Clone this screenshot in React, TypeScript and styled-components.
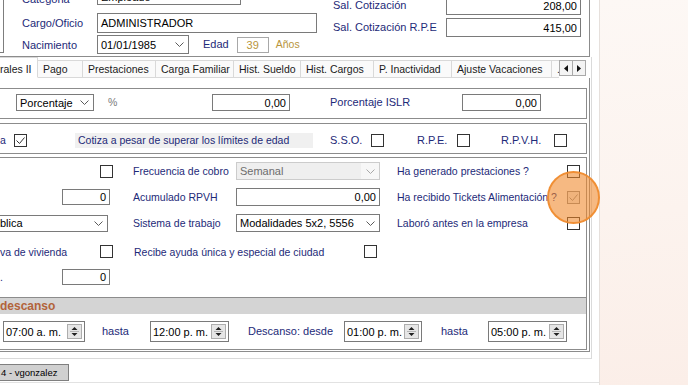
import React from 'react';
import styled, { createGlobalStyle, css } from 'styled-components';

const NAVY = '#1d2a78';
const GOLD = '#b8953c';
const LINE = '#8c8c8c';

const GlobalStyle = createGlobalStyle`
  *, *::before, *::after { box-sizing: border-box; }
  html, body { margin: 0; padding: 0; }
  body {
    width: 688px;
    height: 385px;
    overflow: hidden;
    background: #fcf4ef;
    font-family: "Liberation Sans", Arial, sans-serif;
    font-size: 10.5px;
    color: #000;
  }
`;

type Offset = { $ml?: number };

const offset = css<Offset>`
  margin-left: ${p => p.$ml ?? 0}px;
  flex-shrink: 0;
`;

const Page = styled.div`
  position: relative;
  display: flex;
  width: 688px;
  height: 385px;
`;

const Window = styled.div`
  width: 600px;
  height: 385px;
  background: #fff;
  border-right: 1px solid #e6e0dc;
  display: flex;
  flex-direction: column;
  overflow: hidden;
`;

const Backdrop = styled.div`
  flex: 1;
  background: linear-gradient(175deg, #fdf8f5 0%, #fcf3ee 55%, #fbeee8 100%);
`;

// ---------- header form ----------
const TopGroup = styled.section`
  flex: 0 0 57px;
  width: 590px;
  display: flex;
  border-right: 1px solid ${LINE};
  border-bottom: 1px solid ${LINE};
`;

const PhotoEdge = styled.div`
  flex: 0 0 4px;
  height: 53px;
  border-right: 1px solid #7d7d7d;
  border-bottom: 1px solid #7d7d7d;
`;

const LeftForm = styled.div`
  width: 311px;
  margin-left: 18px;
  margin-top: -12px;
  display: flex;
  flex-direction: column;
`;

const RightForm = styled.div`
  width: 256px;
  margin-top: -4px;
  display: flex;
  flex-direction: column;
`;

const FormLine = styled.div<{ $h: number; $mt?: number }>`
  display: flex;
  align-items: center;
  height: ${p => p.$h}px;
  margin-top: ${p => p.$mt ?? 0}px;
`;

const Label = styled.span<Offset & { $w?: number; $color?: string; $pt?: number; $size?: number }>`
  ${offset}
  width: ${p => (p.$w ? `${p.$w}px` : 'auto')};
  color: ${p => p.$color ?? NAVY};
  padding-top: ${p => p.$pt ?? 0}px;
  font-size: ${p => (p.$size ? `${p.$size}px` : 'inherit')};
  line-height: 13px;
  white-space: nowrap;
`;

const TextBox = styled.div<Offset & { $w: number; $h: number; $align?: string; $color?: string; $light?: boolean }>`
  ${offset}
  width: ${p => p.$w}px;
  height: ${p => p.$h}px;
  border: 1px solid ${p => (p.$light ? '#a8a8a8' : '#7a7a7a')};
  background: #fff;
  color: ${p => p.$color ?? '#000'};
  display: flex;
  align-items: center;
  justify-content: ${p => (p.$align === 'right' ? 'flex-end' : p.$align === 'center' ? 'center' : 'flex-start')};
  padding: 0 3px;
  font-size: 11px;
  white-space: nowrap;
  overflow: hidden;
`;

const ComboBox = styled.div<Offset & { $w: number; $h: number; $disabled?: boolean }>`
  ${offset}
  width: ${p => p.$w}px;
  height: ${p => p.$h}px;
  border: 1px solid ${p => (p.$disabled ? '#cccccc' : '#7a7a7a')};
  background: ${p => (p.$disabled ? '#efefef' : '#fff')};
  color: ${p => (p.$disabled ? '#6d6d6d' : '#000')};
  display: flex;
  align-items: center;
  padding-left: 3px;
  font-size: 11px;
  white-space: nowrap;
  overflow: hidden;
`;

const ComboText = styled.span`
  flex: 1;
  overflow: hidden;
`;

const ComboButton = styled.span<{ $disabled?: boolean }>`
  flex: 0 0 18px;
  align-self: stretch;
  display: flex;
  align-items: center;
  justify-content: center;
  background: ${p => (p.$disabled ? '#f7f7f7' : 'transparent')};
`;

const Chevron = ({ color = '#5a5a5a' }: { color?: string }) => (
  <svg width="9" height="5" viewBox="0 0 9 5">
    <polyline points="0.5,0.5 4.5,4.5 8.5,0.5" fill="none" stroke={color} strokeWidth="1" />
  </svg>
);

const Combo = ({ text, w, h, ml, disabled }: { text: string; w: number; h: number; ml?: number; disabled?: boolean }) => (
  <ComboBox $w={w} $h={h} $ml={ml} $disabled={disabled}>
    <ComboText>{text}</ComboText>
    <ComboButton $disabled={disabled}>
      <Chevron color={disabled ? '#a8a8a8' : '#5a5a5a'} />
    </ComboButton>
  </ComboBox>
);

const CheckBoxFrame = styled.span<Offset & { $disabled?: boolean }>`
  ${offset}
  width: 13px;
  height: 13px;
  border: 1px solid ${p => (p.$disabled ? '#8f8f8f' : '#333')};
  background: ${p => (p.$disabled ? '#f0f0f0' : '#fff')};
  display: inline-flex;
  align-items: center;
  justify-content: center;
`;

const CheckBox = ({ checked, disabled, ml }: { checked?: boolean; disabled?: boolean; ml?: number }) => (
  <CheckBoxFrame $ml={ml} $disabled={disabled}>
    {checked && (
      <svg width="11" height="11" viewBox="0 0 11 11">
        <polyline points="1.5,5.5 4.5,8.5 9.5,2.5" fill="none" stroke={disabled ? '#8f8f8f' : '#333'} strokeWidth="1" />
      </svg>
    )}
  </CheckBoxFrame>
);

// ---------- tabs ----------
const TabControl = styled.div`
  width: 592px;
  border-right: 1px solid #dadada;
  border-bottom: 1px solid #dadada;
  padding-bottom: 6px;
`;

const TabStrip = styled.div`
  display: flex;
  height: 21px;
  width: 590px;
`;

const TabRow = styled.div`
  display: flex;
  align-items: flex-end;
  width: 559px;
  height: 21px;
  overflow: hidden;
`;

const Tab = styled.div<{ $w: number; $active?: boolean }>`
  flex: 0 0 ${p => p.$w}px;
  height: ${p => (p.$active ? 21 : 18)}px;
  border-top: 1px solid #d9d9d9;
  border-right: 1px solid #d9d9d9;
  border-bottom: 1px solid ${p => (p.$active ? '#fff' : '#d9d9d9')};
  background: ${p => (p.$active ? '#fff' : '#fafafa')};
  padding-left: ${p => (p.$active ? 0 : 5)}px;
  padding-top: ${p => (p.$active ? 3 : 0)}px;
  display: flex;
  align-items: center;
  color: #1a1a1a;
  white-space: nowrap;
  overflow: hidden;
`;

const ScrollArrows = styled.div`
  display: flex;
  margin-top: 3px;
  height: 16px;
`;

const ArrowButton = styled.span`
  width: 14px;
  height: 16px;
  border: 1px solid #a9a9a9;
  background: #f4f4f4;
  display: flex;
  align-items: center;
  justify-content: center;
  & + & {
    margin-left: -1px;
  }
`;

const TabPage = styled.div`
  width: 590px;
  height: 274px;
  border-right: 1px solid ${LINE};
  border-bottom: 1px solid ${LINE};
  padding-top: 10px;
`;

const Group = styled.div<{ $h: number; $mt?: number }>`
  margin-left: -2px;
  margin-top: ${p => p.$mt ?? 0}px;
  width: 589px;
  height: ${p => p.$h}px;
  border: 1px solid ${LINE};
`;

const GroupRow = styled.div<{ $h: number; $mt: number }>`
  display: flex;
  align-items: center;
  height: ${p => p.$h}px;
  margin-top: ${p => p.$mt}px;
`;

const Note = styled.span<Offset & { $w: number }>`
  ${offset}
  width: ${p => p.$w}px;
  height: 15px;
  background: #f0f0f0;
  color: ${NAVY};
  display: flex;
  align-items: center;
  padding-left: 3px;
  white-space: nowrap;
`;

const FieldGrid = styled.div`
  display: grid;
  grid-template-columns: 63px 51px 123px 144px 187px 13px;
  grid-template-rows: 26px 26px 26px 31px 19px;
  align-items: center;
`;

const GridLabel = styled.span<{ $pl?: number }>`
  padding-left: ${p => p.$pl ?? 0}px;
  color: ${NAVY};
  white-space: nowrap;
`;

const EndCell = styled.div`
  display: flex;
  justify-content: flex-end;
`;

const SpanCell = styled.div<{ $from: number; $to: number }>`
  grid-column: ${p => p.$from} / ${p => p.$to};
  display: flex;
  align-items: center;
`;

const WideCheckCell = styled.div`
  grid-column: 3 / 5;
  display: flex;
  align-items: center;
  justify-content: space-between;
  padding-left: 21px;
  padding-right: 3px;
  color: ${NAVY};
  white-space: nowrap;
`;

const SectionBar = styled.div`
  margin-top: 11px;
  height: 17px;
  border-top: 1px solid ${LINE};
  background: #d4d4d4;
  color: #b2633a;
  font-weight: bold;
  font-size: 12px;
  padding-left: 1px;
  display: flex;
  align-items: center;
`;

const TimeRow = styled.div`
  display: flex;
  align-items: center;
  height: 35px;
  padding-left: 4px;
`;

const TimeBox = styled.div<Offset & { $w: number }>`
  ${offset}
  width: ${p => p.$w}px;
  height: 21px;
  border: 1px solid #7a7a7a;
  display: flex;
  align-items: center;
  justify-content: space-between;
  padding-left: 2px;
  font-size: 11px;
  white-space: nowrap;
`;

const SpinButton = styled.span`
  width: 15px;
  height: 15px;
  margin-right: 2px;
  border: 1px solid #adadad;
  background: #e6e6e6;
  display: flex;
  align-items: center;
  justify-content: center;
`;

const Time = ({ value, w, ml }: { value: string; w: number; ml?: number }) => (
  <TimeBox $w={w} $ml={ml}>
    <span>{value}</span>
    <SpinButton>
      <svg width="9" height="11" viewBox="0 0 9 11">
        <path d="M4.5 1 L7.5 4 H1.5 Z M1.5 7 H7.5 L4.5 10 Z" fill="#222" />
        <line x1="0" y1="5.5" x2="9" y2="5.5" stroke="#b5b5b5" strokeWidth="1" />
      </svg>
    </SpinButton>
  </TimeBox>
);

// ---------- status ----------
const StatusBar = styled.div`
  height: 24px;
  padding-top: 5px;
  border-bottom: 1px solid #e2e2e2;
`;

const StatusPanel = styled.div`
  margin-left: -2px;
  width: 71px;
  height: 17px;
  background: #d0d0d0;
  border: 1px solid #7f7f7f;
  font-size: 9.5px;
  padding-left: 2px;
  display: flex;
  align-items: center;
  white-space: nowrap;
`;

const Highlight = styled.div`
  position: absolute;
  left: 547px;
  top: 171px;
  width: 53px;
  height: 53px;
  border-radius: 50%;
  background: rgba(240, 135, 40, 0.58);
  border: 2px solid rgba(240, 140, 45, 0.9);
  pointer-events: none;
`;

const tabs = [
  { label: 'Pago', w: 45 },
  { label: 'Prestaciones', w: 73 },
  { label: 'Carga Familiar', w: 78 },
  { label: 'Hist. Sueldo', w: 67 },
  { label: 'Hist. Cargos', w: 73 },
  { label: 'P.  Inactividad', w: 78 },
  { label: 'Ajuste Vacaciones', w: 100 },
  { label: '.', w: 9 },
];

export default function App() {
  return (
    <>
      <GlobalStyle />
      <Page>
        <Window>
          <TopGroup>
            <PhotoEdge />
            <LeftForm>
              <FormLine $h={17}>
                <Label $w={75} $pt={5} $size={11}>Categoria</Label>
                <Combo text="Empleado" w={144} h={17} />
              </FormLine>
              <FormLine $h={20} $mt={8}>
                <Label $w={75} $size={11}>Cargo/Oficio</Label>
                <TextBox $w={220} $h={20}>ADMINISTRADOR</TextBox>
              </FormLine>
              <FormLine $h={19} $mt={2}>
                <Label $w={75} $pt={2} $size={11}>Nacimiento</Label>
                <Combo text="01/01/1985" w={92} h={19} />
                <Label $ml={14} $size={11}>Edad</Label>
                <TextBox $ml={8} $w={32} $h={16} $align="center" $color={GOLD} $light>39</TextBox>
                <Label $ml={7} $color={GOLD}>Años</Label>
              </FormLine>
            </LeftForm>
            <RightForm>
              <FormLine $h={19}>
                <Label $w={113} $size={11}>Sal. Cotización</Label>
                <TextBox $w={135} $h={19} $align="right">208,00</TextBox>
              </FormLine>
              <FormLine $h={19} $mt={3}>
                <Label $w={113} $size={11}>Sal. Cotización R.P.E</Label>
                <TextBox $w={135} $h={19} $align="right">415,00</TextBox>
              </FormLine>
            </RightForm>
          </TopGroup>

          <TabControl>
            <TabStrip>
              <TabRow>
                <Tab $w={38} $active>rales II</Tab>
                {tabs.map(t => (
                  <Tab key={t.label} $w={t.w}>{t.label}</Tab>
                ))}
              </TabRow>
              <ScrollArrows>
                <ArrowButton>
                  <svg width="4" height="7" viewBox="0 0 4 7"><path d="M4 0 V7 L0 3.5 Z" fill="#111" /></svg>
                </ArrowButton>
                <ArrowButton>
                  <svg width="4" height="7" viewBox="0 0 4 7"><path d="M0 0 V7 L4 3.5 Z" fill="#111" /></svg>
                </ArrowButton>
              </ScrollArrows>
            </TabStrip>

            <TabPage>
              <Group $h={31}>
                <GroupRow $h={17} $mt={5}>
                  <Combo text="Porcentaje" w={78} h={17} ml={17} />
                  <Label $ml={14} $w={104} $color="#7a7a7a">%</Label>
                  <TextBox $w={78} $h={17} $align="right">0,00</TextBox>
                  <Label $ml={40} $w={132} $size={11}>Porcentaje ISLR</Label>
                  <TextBox $w={79} $h={17} $align="right">0,00</TextBox>
                </GroupRow>
              </Group>

              <Group $h={31} $mt={4}>
                <GroupRow $h={16} $mt={8}>
                  <Label $ml={1} $w={14}>a</Label>
                  <CheckBox checked />
                  <Note $ml={48} $w={238}>Cotiza a pesar de superar los límites de edad</Note>
                  <Label $ml={17} $w={41} $size={11}>S.S.O.</Label>
                  <CheckBox />
                  <Label $ml={33} $w={40} $size={11}>R.P.E.</Label>
                  <CheckBox />
                  <Label $ml={31} $w={53} $size={11}>R.P.V.H.</Label>
                  <CheckBox />
                </GroupRow>
              </Group>

              <Group $h={193} $mt={3}>
                <FieldGrid>
                  <span />
                  <EndCell><CheckBox /></EndCell>
                  <GridLabel $pl={20}>Frecuencia de cobro</GridLabel>
                  <Combo text="Semanal" w={144} h={18} disabled />
                  <GridLabel $pl={17}>Ha generado prestaciones ?</GridLabel>
                  <CheckBox />

                  <span />
                  <TextBox $w={48} $h={16} $align="right">0</TextBox>
                  <GridLabel $pl={20}>Acumulado RPVH</GridLabel>
                  <TextBox $w={144} $h={18} $align="right">0,00</TextBox>
                  <GridLabel $pl={17}>Ha recibido Tickets Alimentación ?</GridLabel>
                  <CheckBox checked disabled />

                  <SpanCell $from={1} $to={3}>
                    <Combo text="blica" w={112} h={17} ml={-3} />
                  </SpanCell>
                  <GridLabel $pl={20}>Sistema de trabajo</GridLabel>
                  <Combo text="Modalidades 5x2, 5556" w={144} h={18} />
                  <GridLabel $pl={17}>Laboró antes en la empresa</GridLabel>
                  <CheckBox />

                  <GridLabel $pl={1}>va de vivienda</GridLabel>
                  <EndCell><CheckBox /></EndCell>
                  <WideCheckCell>
                    <span>Recibe ayuda única y especial de ciudad</span>
                    <CheckBox />
                  </WideCheckCell>
                  <span />
                  <span />

                  <GridLabel $pl={1}>.</GridLabel>
                  <TextBox $w={48} $h={16} $align="right">0</TextBox>
                </FieldGrid>

                <SectionBar>descanso</SectionBar>
                <TimeRow>
                  <Time value="07:00 a. m." w={82} />
                  <Label $ml={17} $w={48} $size={11}>hasta</Label>
                  <Time value="12:00 p. m." w={79} />
                  <Label $ml={19} $w={96} $size={11}>Descanso: desde</Label>
                  <Time value="01:00 p. m." w={78} />
                  <Label $ml={19} $w={47} $size={11}>hasta</Label>
                  <Time value="05:00 p. m." w={79} />
                </TimeRow>
              </Group>
            </TabPage>
          </TabControl>

          <StatusBar>
            <StatusPanel>4 - vgonzalez</StatusPanel>
          </StatusBar>
        </Window>
        <Backdrop />
        <Highlight />
      </Page>
    </>
  );
}
